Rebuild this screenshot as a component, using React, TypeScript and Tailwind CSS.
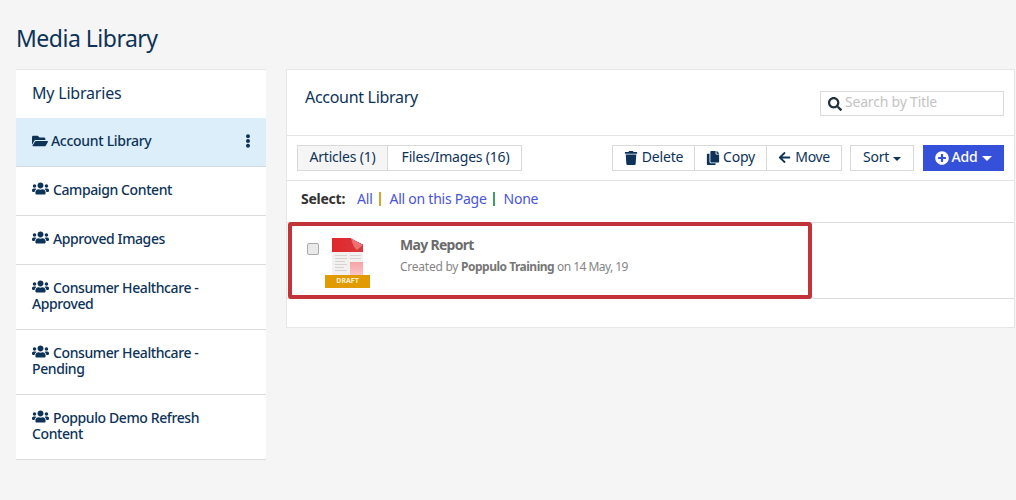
import { FaArrowLeft, FaCopy, FaEllipsisV, FaFolderOpen, FaPlusCircle, FaSearch, FaTrash, FaUsers } from "react-icons/fa";

const libraries = [
  { name: "Campaign Content", h: "h-[49px]" },
  { name: "Approved Images", h: "h-[49px]" },
  { name: "Consumer Healthcare - Approved", h: "h-[65px]" },
  { name: "Consumer Healthcare - Pending", h: "h-[65px]" },
  { name: "Poppulo Demo Refresh Content", h: "h-[65px]" },
];

function Thumb() {
  return (
    <svg width="31" height="37" viewBox="0 0 31 37" className="block">
      <defs>
        <linearGradient id="head" x1="0" y1="0" x2="1" y2="0">
          <stop offset="0" stopColor="#e0262b" />
          <stop offset="1" stopColor="#d83a3f" />
        </linearGradient>
        <linearGradient id="pic" x1="0" y1="0" x2="0" y2="1">
          <stop offset="0" stopColor="#f7a3a5" />
          <stop offset="1" stopColor="#f9c4c5" />
        </linearGradient>
      </defs>
      <path d="M0 0H19V1H21V2H23V3H25V4H27V5H29V6H31V37H0Z" fill="#f3f1f0" />
      <path d="M0 0H19V1H21V2H23V3H25V4H27V5H29V6H31V14H0Z" fill="url(#head)" />
      <path d="M19 0L31 7L25 12Q21 9 19 0Z" fill="#ee6f72" />
      <g fill="#d6d3d2">
        <rect x="3" y="17" width="12" height="1" />
        <rect x="3" y="20" width="12" height="1" />
        <rect x="3" y="23" width="10" height="1" />
        <rect x="3" y="26" width="12" height="1" />
        <rect x="3" y="29" width="9" height="1" />
        <rect x="3" y="32" width="12" height="1" />
        <rect x="18" y="17" width="11" height="1" />
        <rect x="18" y="20" width="11" height="1" />
      </g>
      <rect x="18" y="24" width="13" height="13" fill="url(#pic)" />
    </svg>
  );
}

export default function App() {
  return (
    <div className="h-[500px] w-[1016px] overflow-hidden bg-[#f5f5f5] pl-4 font-['Noto_Sans',sans-serif] text-[#0d3358]">
      <h1 className="flex h-[69px] items-start pt-[20px] text-[23px] leading-[36px] tracking-[-0.5px]">Media Library</h1>

      <div className="flex items-start gap-5">
        <aside className="w-[250px] border-t border-[#e6e6e6] bg-white">
          <div className="flex h-[48px] items-center px-4 pb-[2px] text-[16px] tracking-[-0.2px]">My Libraries</div>
          <div className="flex h-[49px] items-center border-b border-[#d5dadd] bg-[#ddeefb] px-4 pb-[3px] text-[14px] font-medium tracking-[-0.3px]">
            <FaFolderOpen className="mr-[3px] text-[16px]" />
            <span className="flex-1">Account Library</span>
            <FaEllipsisV className="mr-[-5px] text-[14px]" />
          </div>
          {libraries.map((lib) => (
            <div key={lib.name} className={`${lib.h} flex items-center border-b border-[#dcdcdc] px-4 pb-[5px] text-[14px] font-medium leading-[16px] tracking-[-0.4px]`}>
              <p className="w-[190px]">
                <FaUsers className="mr-1 inline-block align-[-2px] text-[17px]" />
                {lib.name}
              </p>
            </div>
          ))}
        </aside>

        <main className="relative h-[259px] w-[729px] border border-[#e6e6e6] bg-white">
          <div className="flex h-[65px] items-start justify-between pl-[18px] pr-[10px]">
            <h2 className="mt-[16px] text-[16px] leading-[22px] tracking-[-0.3px]">Account Library</h2>
            <div className="mt-[21px] flex h-[25px] w-[184px] items-center gap-[3px] border border-[#d9d9d9] px-[7px] pb-[4px] text-[14px] tracking-[-0.2px] text-[#c4c4c4]">
              <FaSearch className="mt-[4px] text-[14px] text-[#22303c]" />
              Search by Title
            </div>
          </div>

          <div className="flex h-[46px] items-center justify-between border-y border-[#e4e4e4] px-[10px] text-[14px] tracking-[-0.2px]">
            <div className="flex h-[26px] border border-[#d9d9d9]">
              <div className="flex w-[90px] items-center justify-center border-r border-[#d9d9d9] bg-[#f5f5f5] pb-[3px]">Articles (1)</div>
              <div className="flex w-[133px] items-center justify-center pb-[3px] pl-[2px]">Files/Images (16)</div>
            </div>
            <div className="flex items-center">
              <div className="flex h-[26px] border border-[#d9d9d9]">
                <div className="flex w-[82px] items-center justify-center gap-[4px] border-r border-[#d9d9d9] pb-[3px]"><FaTrash className="mt-[2px] text-[14px]" />Delete</div>
                <div className="flex w-[72px] items-center justify-center gap-[3px] border-r border-[#d9d9d9] pb-[3px]"><FaCopy className="mt-[2px] text-[14px]" />Copy</div>
                <div className="flex w-[74px] items-center justify-center gap-[4px] pb-[3px] tracking-[-0.4px]"><FaArrowLeft className="mt-[2px] text-[13px]" />Move</div>
              </div>
              <div className="ml-2 flex h-[26px] w-[64px] items-center justify-center gap-[4px] border border-[#d9d9d9] pb-[3px]">
                Sort
                <span className="mt-[4px] border-x-[4px] border-t-[4px] border-x-transparent border-t-[#0d3358]" />
              </div>
              <div className="ml-[9px] flex h-[26px] w-[81px] items-center justify-center gap-[3px] bg-[#3651d9] pb-[3px] font-medium text-white">
                <FaPlusCircle className="mt-[2px] text-[14px]" />
                Add
                <span className="ml-[2px] mt-[3px] border-x-[5px] border-t-[5px] border-x-transparent border-t-white" />
              </div>
            </div>
          </div>

          <div className="flex h-[42px] items-center border-b border-[#dcdcdc] pb-[6px] pl-[14px] text-[14px] tracking-[-0.25px]">
            <span className="mr-3 font-bold text-[#333333]">Select:</span>
            <span className="border-r-2 border-[#e0a030] pr-[6px] leading-[14px] text-[#4a55d8]">All</span>
            <span className="ml-[9px] border-r-2 border-[#3f9f6a] pr-[6px] leading-[14px] text-[#4a55d8]">All on this Page</span>
            <span className="ml-[9px] text-[#4a55d8]">None</span>
          </div>

          <div className="flex h-[76px] items-start border-b border-[#dcdcdc] pl-[20px]">
            <input type="checkbox" className="mt-[20px] h-[12px] w-[12px] appearance-none rounded-[2px] border border-[#aaaaaa] bg-[#e9e9e9]" />
            <div className="ml-[6px] mt-[15px] flex w-[45px] flex-col items-center">
              <Thumb />
              <div className="flex h-[13px] w-[45px] items-center justify-center bg-[#e19a00] text-[7px] font-bold text-[#fdf0d0]">DRAFT</div>
            </div>
            <div className="ml-[30px] mt-[12px] text-[#6b6b6b]">
              <p className="text-[14px] font-bold leading-[20px] tracking-[-0.7px]">May Report</p>
              <p className="mt-[2px] text-[12px] leading-[20px] tracking-[-0.25px] text-[#858585]">
                Created by <b className="font-bold tracking-[-0.5px] text-[#777777]">Poppulo Training</b> <span className="tracking-[-0.55px]">on 14 May, 19</span>
              </p>
            </div>
          </div>

          <div className="pointer-events-none absolute left-[1px] top-[152px] h-[77px] w-[524px] rounded-[3px] border-4 border-[#c2343a]" />
        </main>
      </div>
    </div>
  );
}
